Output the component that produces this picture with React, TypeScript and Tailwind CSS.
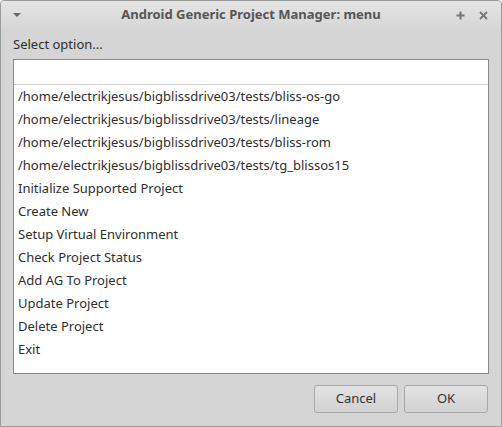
const items = [
  "/home/electrikjesus/bigblissdrive03/tests/bliss-os-go",
  "/home/electrikjesus/bigblissdrive03/tests/lineage",
  "/home/electrikjesus/bigblissdrive03/tests/bliss-rom",
  "/home/electrikjesus/bigblissdrive03/tests/tg_blissos15",
  "Initialize Supported Project",
  "Create New",
  "Setup Virtual Environment",
  "Check Project Status",
  "Add AG To Project",
  "Update Project",
  "Delete Project",
  "Exit",
];

export default function App() {
  return (
    <div
      className="w-[502px] h-[427px] flex flex-col bg-[#d5d5d5] border border-[#9a9a9a] rounded-t-[4px] overflow-hidden text-[13px] text-[#2e2e2e]"
      style={{ fontFamily: '"Noto Sans", "Open Sans", sans-serif' }}
    >
      {/* title bar */}
      <div className="h-[29px] flex items-center px-[10px] bg-gradient-to-b from-[#e4e4e4] to-[#d6d6d6]">
        <svg width="10" height="6" viewBox="0 0 10 6" className="ml-[1px]">
          <path d="M1 1 L9 1 L5 5 Z" fill="#666" />
        </svg>
        <div className="flex-1 text-center font-bold text-[#555] pl-[24px]">
          Android Generic Project Manager: menu
        </div>
        <div className="flex items-center gap-[14px] text-[#777] pr-[3px]">
          <svg width="9" height="9" viewBox="0 0 9 9">
            <path d="M4.5 0.5 V8.5 M0.5 4.5 H8.5" stroke="#777" strokeWidth="2" />
          </svg>
          <svg width="9" height="9" viewBox="0 0 9 9">
            <path d="M1 1 L8 8 M8 1 L1 8" stroke="#777" strokeWidth="1.8" />
          </svg>
        </div>
      </div>

      {/* body */}
      <div className="flex-1 flex flex-col px-[12px] pt-[6px] pb-[13px]">
        <div className="leading-[18px]">Select option...</div>
        <div className="mt-[6px] h-[315px] bg-white border border-[#8a8a8a] flex flex-col">
          <div className="h-[25px] border-b border-[#cfcfcf]" />
          <div className="flex flex-col">
            {items.map((t) => (
              <div key={t} className="h-[23px] leading-[23px] pl-[4px] text-[#2e2e2e]">
                {t}
              </div>
            ))}
          </div>
        </div>
        <div className="flex justify-end gap-[6px] mt-[11px] pr-[1px]">
          <button className="w-[84px] h-[28px] rounded-[3px] border border-[#a8a8a8] bg-gradient-to-b from-[#e2e2e2] to-[#d2d2d2] text-[#333]">
            Cancel
          </button>
          <button className="w-[84px] h-[28px] rounded-[3px] border border-[#a8a8a8] bg-gradient-to-b from-[#e2e2e2] to-[#d2d2d2] text-[#333]">
            OK
          </button>
        </div>
      </div>
    </div>
  );
}
